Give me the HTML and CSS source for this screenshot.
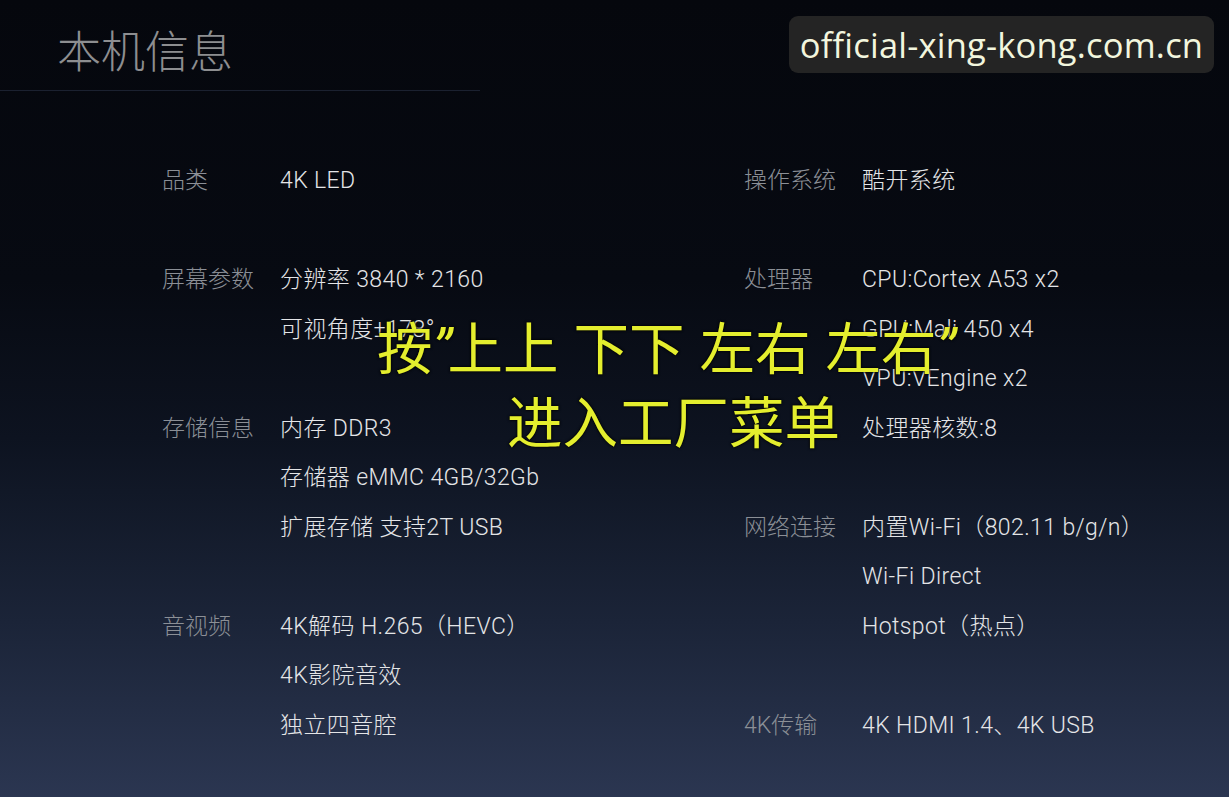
FILE: index.html
```html
<!DOCTYPE html>
<html lang="zh-CN">
<head>
<meta charset="utf-8">
<title>本机信息</title>
<link rel="stylesheet" href="styles.css">
</head>
<body>
<div class="screen">
  <header class="header">
    <h1 class="title">本机信息</h1>
    <div class="divider"></div>
  </header>

  <main class="specs">
    <section class="col">
      <div class="group">
        <div class="label">品类</div>
        <div class="values"><div class="v">4K LED</div></div>
      </div>
      <div class="group">
        <div class="label">屏幕参数</div>
        <div class="values">
          <div class="v">分辨率 3840 * 2160</div>
          <div class="v">可视角度±178°</div>
        </div>
      </div>
      <div class="group">
        <div class="label">存储信息</div>
        <div class="values">
          <div class="v">内存 DDR3</div>
          <div class="v">存储器 eMMC 4GB/32Gb</div>
          <div class="v">扩展存储 支持2T USB</div>
        </div>
      </div>
      <div class="group">
        <div class="label">音视频</div>
        <div class="values">
          <div class="v">4K解码 H.265（HEVC）</div>
          <div class="v">4K影院音效</div>
          <div class="v">独立四音腔</div>
        </div>
      </div>
    </section>

    <section class="col">
      <div class="group">
        <div class="label">操作系统</div>
        <div class="values"><div class="v">酷开系统</div></div>
      </div>
      <div class="group">
        <div class="label">处理器</div>
        <div class="values">
          <div class="v">CPU:Cortex A53 x2</div>
          <div class="v">GPU:Mali 450 x4</div>
          <div class="v">VPU:VEngine x2</div>
          <div class="v">处理器核数:8</div>
        </div>
      </div>
      <div class="group">
        <div class="label">网络连接</div>
        <div class="values">
          <div class="v">内置Wi-Fi（802.11 b/g/n）</div>
          <div class="v">Wi-Fi Direct</div>
          <div class="v">Hotspot（热点）</div>
        </div>
      </div>
      <div class="group">
        <div class="label">4K传输</div>
        <div class="values"><div class="v">4K HDMI 1.4、4K USB</div></div>
      </div>
    </section>
  </main>

  <div class="watermark">official-xing-kong.com.cn</div>

  <div class="caption">
    <div class="cap-line">按<span class="q">”</span>上上<span class="sp"> </span>下下<span class="sp"> </span>左右<span class="sp"> </span>左右<span class="q">”</span></div>
    <div class="cap-line second">进入工厂菜单</div>
  </div>
</div>
</body>
</html>
```

FILE: styles.css
```css
* { box-sizing: border-box; }

html, body {
  margin: 0;
  padding: 0;
  width: 1229px;
  height: 797px;
  overflow: hidden;
}

body {
  font-family: "Roboto", "Noto Sans CJK SC", sans-serif;
}

.screen {
  position: relative;
  width: 1229px;
  height: 797px;
  background: linear-gradient(180deg, #05070d 0%, #070a12 35%, #0d1320 55%, #1b2438 78%, #2b3651 100%);
  overflow: hidden;
}

.header {
  padding-top: 22px;
}

.title {
  margin: 0 0 0 57px;
  font-family: "Noto Sans CJK SC", sans-serif;
  font-weight: 300;
  font-size: 44px;
  line-height: 54px;
  color: #8d8e90;
}

.divider {
  margin-top: 14px;
  width: 480px;
  height: 1px;
  background: #1b2130;
}

.specs {
  display: grid;
  grid-template-columns: 582px 1fr;
  padding-left: 162px;
  padding-top: 65px;
}

.col {
  display: flex;
  flex-direction: column;
  gap: 49.5px;
}

.group {
  display: grid;
  grid-template-columns: 118px 1fr;
}

.label,
.v {
  font-size: 23px;
  line-height: 49.5px;
  height: 49.5px;
  white-space: nowrap;
  font-weight: 300;
}

.v {
  color: #e4e5e7;
  letter-spacing: 0.4px;
}

.label {
  color: #8b8f96;
}

.watermark {
  position: absolute;
  top: 16px;
  left: 789px;
  width: 425px;
  height: 57px;
  border-radius: 9px;
  background: #242424;
  color: #f2f6de;
  font-family: "Open Sans", "Noto Sans", sans-serif;
  font-size: 34.5px;
  line-height: 57px;
  text-align: center;
  letter-spacing: 0.2px;
}

.caption {
  position: absolute;
  top: 311px;
  left: 377px;
  display: flex;
  flex-direction: column;
  align-items: flex-start;
  font-family: "Noto Sans CJK SC", sans-serif;
  font-weight: 400;
  color: #e4ee2e;
  font-size: 55.5px;
  line-height: 68px;
  text-shadow: 0 0 3px #000, 0 0 2px #000;
}

.cap-line {
  white-space: nowrap;
}

.cap-line.second {
  margin-left: 130px;
}

.q {
  font-family: "Roboto", sans-serif;
  font-style: italic;
  display: inline-block;
  width: 15px;
  text-align: center;
}

.sp {
  font-family: "Roboto", sans-serif;
  display: inline-block;
  width: 15px;
}
```
